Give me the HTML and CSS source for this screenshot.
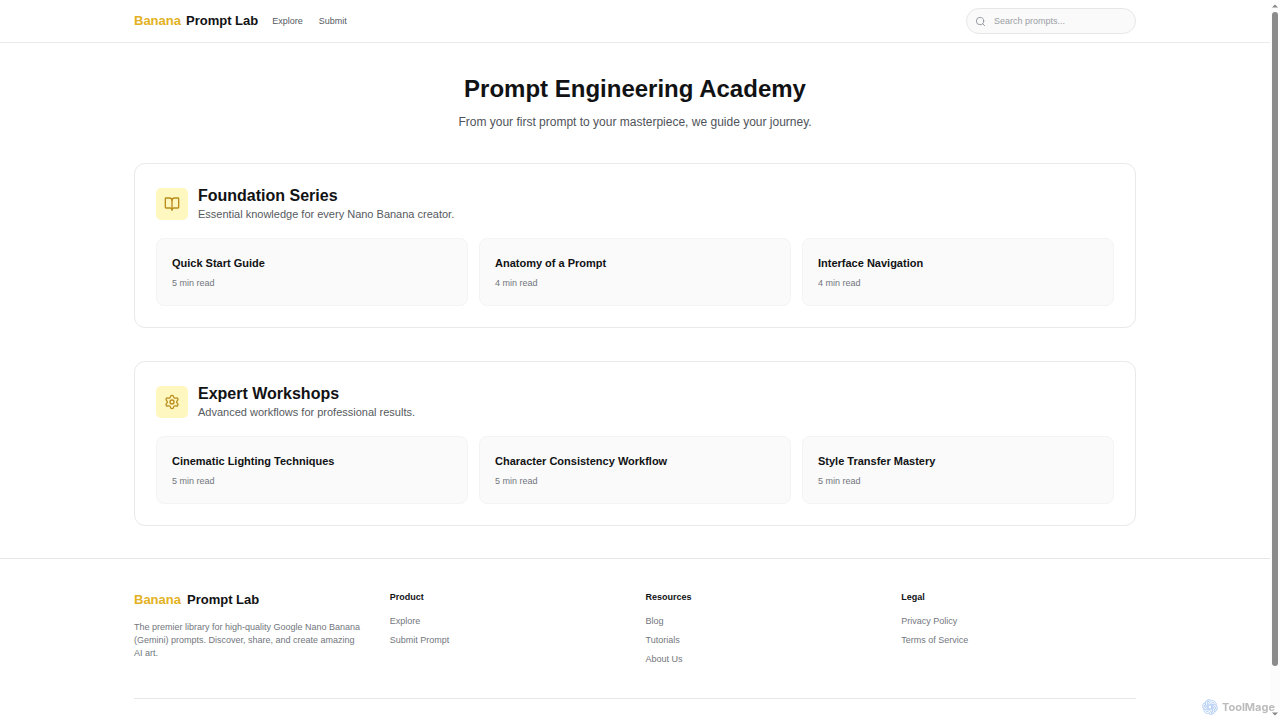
FILE: index.html
```html
<!DOCTYPE html>
<html lang="en">
<head>
<meta charset="utf-8">
<meta name="viewport" content="width=device-width, initial-scale=1">
<title>Prompt Engineering Academy</title>
<link rel="stylesheet" href="styles.css">
</head>
<body>
<div class="page">
  <header class="site-header">
    <div class="container header-row">
      <a class="logo" href="#"><span class="logo-accent">Banana</span><span>Prompt Lab</span></a>
      <nav class="nav"><a href="#">Explore</a><a href="#">Submit</a></nav>
      <label class="search">
        <svg viewBox="0 0 24 24" aria-hidden="true"><circle cx="11" cy="11" r="8"/><path d="m21 21-4.3-4.3"/></svg>
        <input type="search" placeholder="Search prompts..." aria-label="Search prompts">
      </label>
    </div>
  </header>

  <main class="container main">
    <div class="intro">
      <h1>Prompt Engineering Academy</h1>
      <p>From your first prompt to your masterpiece, we guide your journey.</p>
    </div>

    <section class="series">
      <div class="series-head">
        <span class="series-icon"><svg viewBox="0 0 24 24" aria-hidden="true"><path d="M12 7v14"/><path d="M3 18a1 1 0 0 1-1-1V4a1 1 0 0 1 1-1h5a4 4 0 0 1 4 4 4 4 0 0 1 4-4h5a1 1 0 0 1 1 1v13a1 1 0 0 1-1 1h-6a3 3 0 0 0-3 3 3 3 0 0 0-3-3z"/></svg></span>
        <div>
          <h2>Foundation Series</h2>
          <p>Essential knowledge for every Nano Banana creator.</p>
        </div>
      </div>
      <div class="cards">
        <a class="card" href="#"><h3>Quick Start Guide</h3><p>5 min read</p></a>
        <a class="card" href="#"><h3>Anatomy of a Prompt</h3><p>4 min read</p></a>
        <a class="card" href="#"><h3>Interface Navigation</h3><p>4 min read</p></a>
      </div>
    </section>

    <section class="series">
      <div class="series-head">
        <span class="series-icon"><svg viewBox="0 0 24 24" aria-hidden="true"><path d="M9.671 4.136a2.34 2.34 0 0 1 4.659 0 2.34 2.34 0 0 0 3.319 1.915 2.34 2.34 0 0 1 2.33 4.033 2.34 2.34 0 0 0 0 3.831 2.34 2.34 0 0 1-2.33 4.033 2.34 2.34 0 0 0-3.319 1.915 2.34 2.34 0 0 1-4.659 0 2.34 2.34 0 0 0-3.32-1.915 2.34 2.34 0 0 1-2.33-4.033 2.34 2.34 0 0 0 0-3.831A2.34 2.34 0 0 1 6.35 6.051a2.34 2.34 0 0 0 3.319-1.915"/><circle cx="12" cy="12" r="3"/></svg></span>
        <div>
          <h2>Expert Workshops</h2>
          <p>Advanced workflows for professional results.</p>
        </div>
      </div>
      <div class="cards">
        <a class="card" href="#"><h3>Cinematic Lighting Techniques</h3><p>5 min read</p></a>
        <a class="card" href="#"><h3>Character Consistency Workflow</h3><p>5 min read</p></a>
        <a class="card" href="#"><h3>Style Transfer Mastery</h3><p>5 min read</p></a>
      </div>
    </section>
  </main>

  <footer class="site-footer">
    <div class="container">
      <div class="footer-grid">
        <div>
          <a class="logo logo-footer" href="#"><span class="logo-accent">Banana</span><span>Prompt Lab</span></a>
          <p class="about">The premier library for high-quality Google Nano Banana (Gemini) prompts. Discover, share, and create amazing AI art.</p>
        </div>
        <div class="footer-col">
          <h4>Product</h4>
          <ul><li><a href="#">Explore</a></li><li><a href="#">Submit Prompt</a></li></ul>
        </div>
        <div class="footer-col">
          <h4>Resources</h4>
          <ul><li><a href="#">Blog</a></li><li><a href="#">Tutorials</a></li><li><a href="#">About Us</a></li></ul>
        </div>
        <div class="footer-col">
          <h4>Legal</h4>
          <ul><li><a href="#">Privacy Policy</a></li><li><a href="#">Terms of Service</a></li></ul>
        </div>
      </div>
    </div>
  </footer>
</div>

<div class="scrollbar" aria-hidden="true">
  <svg class="arrow" viewBox="0 0 6 4"><path d="M3 0.5 6 3.5H0z"/></svg>
  <div class="track"><div class="thumb"></div></div>
  <svg class="arrow" viewBox="0 0 6 4"><path d="M3 3.5 0 0.5h6z"/></svg>
</div>

<div class="watermark">
  <svg viewBox="0 0 24 24" aria-hidden="true">
    <path id="petal" d="M10 9C10 4.500 13.500 1.500 17.500 2.800C20 3.700 21.500 5.500 21.500 8M12 8.500C13 5.500 16 4.500 18.500 6"/>
    <use href="#petal" transform="rotate(60 12 12)"/>
    <use href="#petal" transform="rotate(120 12 12)"/>
    <use href="#petal" transform="rotate(180 12 12)"/>
    <use href="#petal" transform="rotate(240 12 12)"/>
    <use href="#petal" transform="rotate(300 12 12)"/>
    <circle cx="12" cy="12" r="3"/>
  </svg>
  <span>ToolMage</span>
</div>
</body>
</html>
```

FILE: styles.css
```css
* {
  box-sizing: border-box;
  margin: 0;
  padding: 0;
}

body {
  background: #fff;
  color: #111214;
  font-family: "Liberation Sans", Arial, sans-serif;
  font-size: 9px;
  line-height: 13px;
}

a {
  color: inherit;
  text-decoration: none;
}

ul {
  list-style: none;
}

svg {
  fill: none;
  stroke: currentColor;
  stroke-width: 2;
  stroke-linecap: round;
  stroke-linejoin: round;
}

.page {
  padding-right: 10px;
}

.container {
  max-width: 1044px;
  margin: 0 auto;
  padding: 0 21px;
}

.site-header {
  border-bottom: 1px solid #ececee;
}

.header-row {
  display: flex;
  align-items: center;
  gap: 14px;
  padding-top: 8px;
  padding-bottom: 8px;
}

.logo {
  display: inline-flex;
  gap: 5px;
  font-size: 13px;
  font-weight: 700;
  line-height: 18px;
}

.logo-footer {
  display: flex;
  gap: 6px;
}

.logo-accent {
  color: #e3b122;
}

.nav {
  display: flex;
  gap: 16px;
  color: #55595f;
}

.search {
  display: flex;
  align-items: center;
  gap: 8px;
  width: 170px;
  height: 26px;
  margin-left: auto;
  padding: 0 8px;
  border: 1px solid #e6e7e9;
  border-radius: 13px;
  background: #fafafa;
  color: #8f939a;
}

.search svg {
  flex: none;
  width: 11px;
  height: 11px;
}

.search input {
  flex: 1;
  min-width: 0;
  border: 0;
  outline: 0;
  background: transparent;
  color: #111214;
  font: inherit;
}

.search input::placeholder {
  color: #9a9ea5;
}

.main {
  display: flex;
  flex-direction: column;
  gap: 33px;
  padding-top: 32px;
  padding-bottom: 32px;
}

.intro {
  display: flex;
  flex-direction: column;
  gap: 12px;
  text-align: center;
}

.intro h1 {
  font-size: 24px;
  line-height: 27px;
}

.intro p {
  color: #4f535a;
  font-size: 12px;
  line-height: 16px;
}

.series {
  padding: 21px;
  border: 1px solid #e8e9eb;
  border-radius: 11px;
}

.series-head {
  display: flex;
  align-items: center;
  gap: 10px;
  margin-bottom: 16px;
}

.series-icon {
  display: grid;
  place-items: center;
  width: 32px;
  height: 32px;
  border-radius: 5px;
  background: #fef7c0;
  color: #b98d1c;
}

.series-icon svg {
  width: 16px;
  height: 16px;
}

.series h2 {
  font-size: 16px;
  line-height: 21px;
}

.series-head p {
  color: #565a60;
  font-size: 11px;
  line-height: 16px;
}

.cards {
  display: grid;
  grid-template-columns: repeat(3, 1fr);
  gap: 11px;
}

.card {
  padding: 16px 15px 15px;
  border: 1px solid #f3f4f5;
  border-radius: 8px;
  background: #fafafa;
}

.card h3 {
  margin-bottom: 6px;
  font-size: 11px;
  line-height: 16px;
}

.card p,
.about,
.footer-col ul {
  color: #72767d;
}

.site-footer {
  border-top: 1px solid #e6e7e9;
}

.footer-grid {
  display: grid;
  grid-template-columns: repeat(4, 1fr);
  gap: 21px;
  padding: 32px 0;
  border-bottom: 1px solid #e6e7e9;
}

.about {
  margin-top: 12px;
  padding-right: 7px;
}

.footer-col h4 {
  margin-bottom: 11px;
  font-size: 9px;
}

.footer-col ul {
  display: flex;
  flex-direction: column;
  gap: 6px;
}

.scrollbar {
  position: fixed;
  top: 0;
  right: 0;
  bottom: 0;
  display: flex;
  flex-direction: column;
  align-items: center;
  width: 10px;
  padding: 4px 0;
  background: #fcfcfc;
}

.arrow {
  width: 6px;
  height: 4px;
  fill: #858585;
  stroke: none;
}

.track {
  flex: 1;
  width: 6px;
  margin: 4px 0;
}

.thumb {
  height: 94%;
  border-radius: 3px;
  background: #8b8b8b;
}

.watermark {
  position: fixed;
  right: 5px;
  bottom: 5px;
  display: flex;
  align-items: center;
  gap: 4px;
  color: #bcbcbc;
  font-family: Inter, "Open Sans", sans-serif;
  font-size: 11px;
  font-weight: 700;
  line-height: 16px;
}

.watermark svg {
  width: 16px;
  height: 16px;
  color: #b3cdf5;
  stroke-width: 1.5;
}
```
